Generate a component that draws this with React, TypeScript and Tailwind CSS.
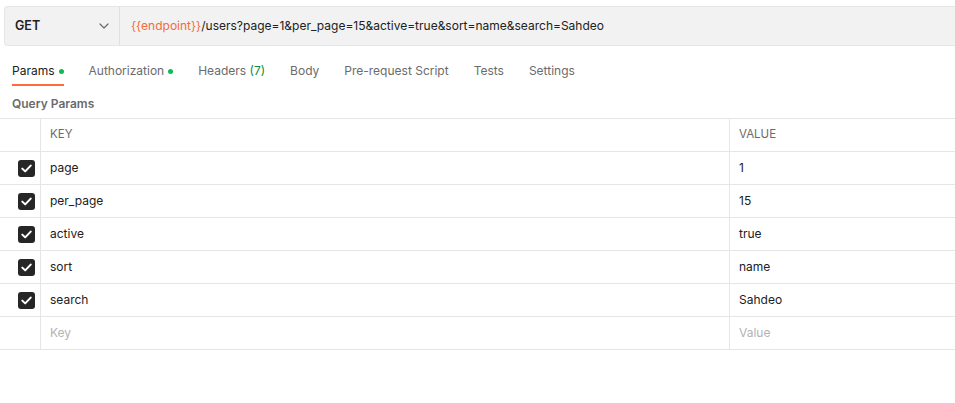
import React from "react";

const rows = [
  { k: "page", v: "1" },
  { k: "per_page", v: "15" },
  { k: "active", v: "true" },
  { k: "sort", v: "name" },
  { k: "search", v: "Sahdeo" },
];

const tabs = ["Body", "Pre-request Script", "Tests", "Settings"];

function Check() {
  return (
    <div className="w-[17px] h-[17px] rounded-[3px] bg-[#262626] flex items-center justify-center">
      <svg width="11" height="9" viewBox="0 0 11 9" fill="none">
        <path d="M1.3 4.6 L4.2 7.4 L9.7 1.6" stroke="white" strokeWidth="2" strokeLinecap="round" strokeLinejoin="round" />
      </svg>
    </div>
  );
}

export default function App() {
  return (
    <div className="w-[955px] h-[403px] bg-white overflow-hidden text-[#212121]" style={{ fontFamily: "Inter, 'Noto Sans', sans-serif" }}>
      <div className="pt-[6px] pl-[4px]">
        <div className="flex h-[40px] bg-[#f2f2f2] border border-[#e6e6e6] rounded-l-[4px] border-r-0">
          <div className="w-[115px] flex items-center justify-between pl-[10px] pr-[10px] border-r border-[#e0e0e0]">
            <span className="text-[12.5px] font-semibold text-[#212121]">GET</span>
            <svg width="10" height="6" viewBox="0 0 10 6" fill="none">
              <path d="M1 1 L5 5 L9 1" stroke="#6b6b6b" strokeWidth="1.2" strokeLinecap="round" strokeLinejoin="round" />
            </svg>
          </div>
          <div className="flex items-center pl-[11px] text-[12px] text-[#212121]">
            <span className="text-[#f26b3a]">{"{{endpoint}}"}</span>
            <span>/users?page=1&amp;per_page=15&amp;active=true&amp;sort=name&amp;search=Sahdeo</span>
          </div>
        </div>
      </div>

      <div className="flex items-end h-[40px] pl-[12px] gap-[25px] text-[12px] text-[#6b6b6b]">
        <div className="flex flex-col">
          <div className="flex items-center gap-[4px] text-[#212121]">
            Params <span className="w-[5px] h-[5px] rounded-full bg-[#0cbb52]" />
          </div>
          <div className="h-[2px] bg-[#ff6c37] mt-[4px]" />
        </div>
        <div className="flex flex-col">
          <div className="flex items-center gap-[4px]">
            Authorization <span className="w-[5px] h-[5px] rounded-full bg-[#0cbb52]" />
          </div>
          <div className="h-[2px] mt-[4px]" />
        </div>
        <div className="flex flex-col">
          <div>Headers <span className="text-[#0a8a3e]">(7)</span></div>
          <div className="h-[2px] mt-[4px]" />
        </div>
        {tabs.map((t) => (
          <div key={t} className="flex flex-col">
            <div>{t}</div>
            <div className="h-[2px] mt-[4px]" />
          </div>
        ))}
      </div>

      <div className="h-[32px] flex items-center pt-[3px] pl-[12px] text-[12px] font-semibold text-[#6b6b6b]">Query Params</div>

      <div className="border-t border-[#e6e6e6] text-[12px]">
        <div className="flex h-[33px] border-b border-[#e6e6e6] text-[#6b6b6b]">
          <div className="w-[41px] border-r border-[#e6e6e6]" />
          <div className="w-[689px] border-r border-[#e6e6e6] flex items-center pl-[9px] text-[11.5px]">KEY</div>
          <div className="flex-1 flex items-center pl-[9px] text-[11.5px]">VALUE</div>
        </div>
        {rows.map((r) => (
          <div key={r.k} className="flex h-[33px] border-b border-[#e6e6e6]">
            <div className="w-[41px] border-r border-[#e6e6e6] flex items-center justify-end pr-[5px]">
              <Check />
            </div>
            <div className="w-[689px] border-r border-[#e6e6e6] flex items-center pl-[9px]">{r.k}</div>
            <div className="flex-1 flex items-center pl-[9px]">{r.v}</div>
          </div>
        ))}
        <div className="flex h-[33px] border-b border-[#e6e6e6] text-[#b3b3b3]">
          <div className="w-[41px] border-r border-[#e6e6e6]" />
          <div className="w-[689px] border-r border-[#e6e6e6] flex items-center pl-[9px]">Key</div>
          <div className="flex-1 flex items-center pl-[9px]">Value</div>
        </div>
      </div>
    </div>
  );
}
